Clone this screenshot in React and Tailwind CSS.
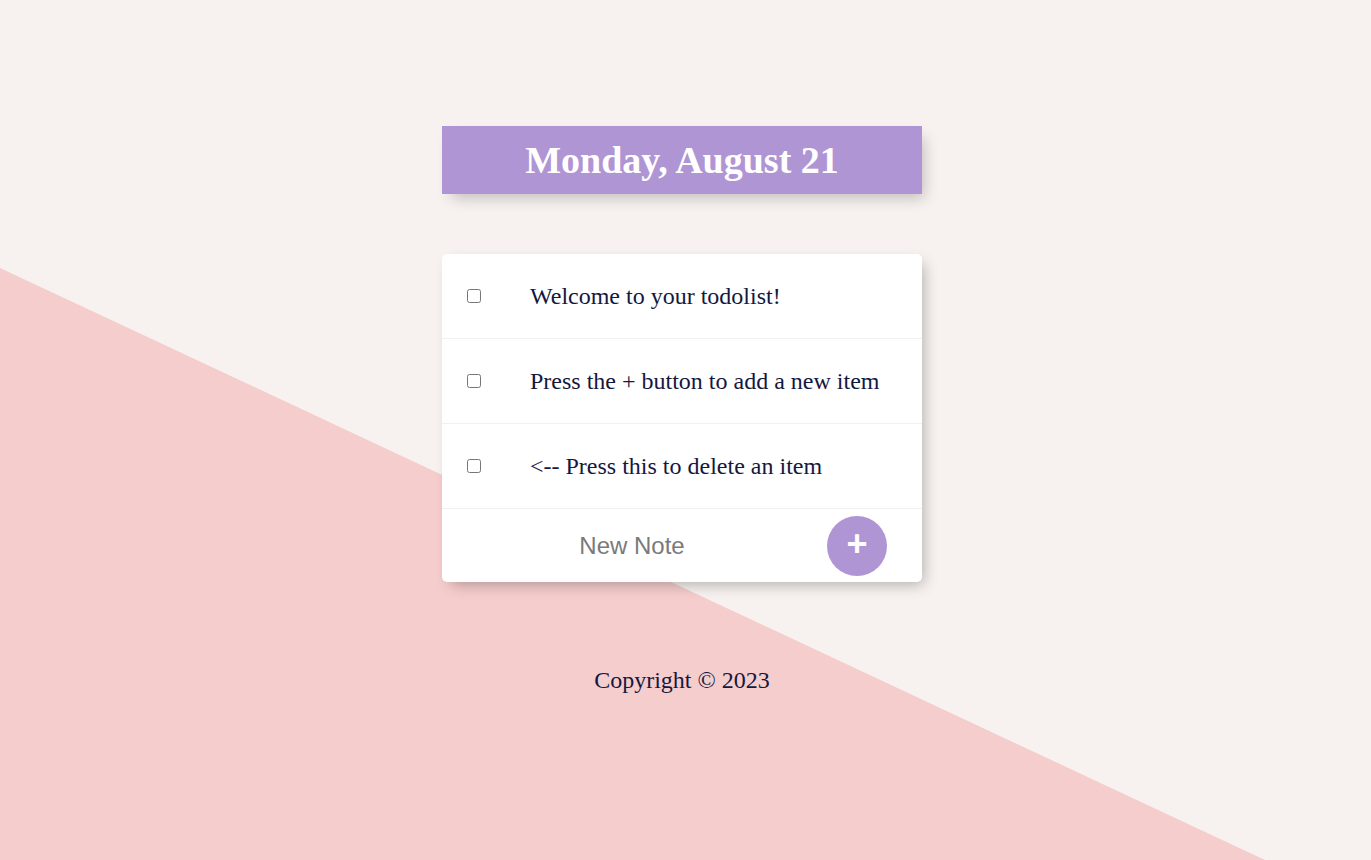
import React, { useState } from 'react';

const initialItems = [
  'Welcome to your todolist!',
  'Press the + button to add a new item',
  '<-- Press this to delete an item',
];

const App = () => {
  const [items, setItems] = useState(initialItems);
  const [note, setNote] = useState('');

  const addItem = (e) => {
    e.preventDefault();
    if (!note.trim()) return;
    setItems([...items, note]);
    setNote('');
  };

  return (
    <div className="relative min-h-[860px] w-full overflow-hidden bg-[#f7f2ef] font-['Liberation_Serif',serif]">
      {/* pink diagonal backdrop */}
      <div className="absolute inset-0 bg-[#f5cdcc] [clip-path:polygon(0_268px,1265px_860px,0_860px)]" />

      <div className="relative flex flex-col items-center pr-[7px] pt-[126px]">
        <div className="flex h-[68px] w-[480px] items-center justify-center bg-[#b095d5] shadow-[6px_8px_14px_-4px_rgba(0,0,0,0.22)]">
          <h1 className="text-[38px] font-bold leading-none text-white">Monday, August 21</h1>
        </div>

        <div className="mt-[60px] w-[480px] rounded-[5px] bg-white shadow-[5px_6px_15px_-4px_rgba(0,0,0,0.3)]">
          {items.map((item) => (
            <div key={item} className="flex h-[85px] items-center border-b border-[#f1f1f1]">
              <input type="checkbox" className="ml-[25px] h-[14px] w-[14px]" />
              <p className="ml-[49px] text-[24px] leading-none text-[#14183e]">{item}</p>
            </div>
          ))}
          <form onSubmit={addItem} className="flex h-[73px] items-center">
            <input
              type="text"
              value={note}
              onChange={(e) => setNote(e.target.value)}
              placeholder="New Note"
              className="ml-[30px] h-[60px] w-[320px] text-center font-['Liberation_Sans',sans-serif] text-[24px] text-[#14183e] outline-none placeholder:text-[#7a7a7a]"
            />
            <button
              type="submit"
              className="ml-[35px] flex h-[60px] w-[60px] items-center justify-center rounded-full bg-[#b095d5] pb-[3px] font-['Liberation_Sans',sans-serif] text-[36px] font-bold leading-none text-white"
            >
              +
            </button>
          </form>
        </div>

        <p className="mt-[80px] text-[24px] text-[#14183e]">Copyright © 2023</p>
      </div>
    </div>
  );
};

export default App;
